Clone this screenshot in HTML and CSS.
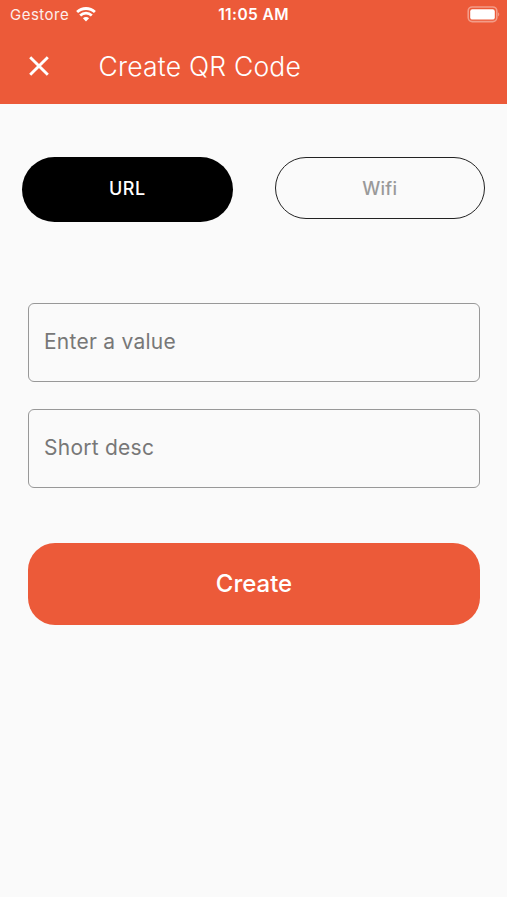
FILE: index.html
```html
<!DOCTYPE html>
<html lang="en">
<head>
<meta charset="utf-8">
<title>Create QR Code</title>
<link rel="stylesheet" href="styles.css">
</head>
<body>
<main class="screen">
  <header class="header">
    <div class="status">
      <div class="carrier"><span class="carrier-name">Gestore</span>
        <svg class="wifi" width="20" height="15" viewBox="0 0 20 15" fill="none" stroke="#fff" stroke-width="2.8">
          <path d="M1.1 5.1C6.2.3 13.8.3 18.9 5.1M4.2 8.5c3.4-3.1 8.2-3.1 11.6 0"/>
          <path d="M6.9 11.2c1.8-1.5 4.4-1.5 6.2 0L10 14.4z" fill="#fff" stroke="none"/>
        </svg>
      </div>
      <span class="time">11:05 AM</span>
      <svg class="battery" width="34" height="17" viewBox="0 0 34 17">
        <rect x="1.2" y="1" width="28.6" height="14.6" rx="4" fill="none" stroke="#fff" stroke-opacity=".4" stroke-width="1.6"/>
        <rect x="3.2" y="3.2" width="24.6" height="10.4" rx="2.2" fill="#fff"/>
        <path d="M31.2 6.2v4.2c1.4-.8 1.4-3.4 0-4.2z" fill="#fff" fill-opacity=".45"/>
      </svg>
    </div>
    <div class="bar">
      <svg class="close" width="20" height="20" viewBox="0 0 20 20" fill="none" stroke="#fff" stroke-width="2.9">
        <path d="M1.2 1.2 18.8 18.8M18.8 1.2 1.2 18.8"/>
      </svg>
      <h1 class="title">Create QR Code</h1>
    </div>
  </header>
  <div class="tabs">
    <button class="tab tab-active"><span>URL</span></button>
    <button class="tab"><span>Wifi</span></button>
  </div>
  <form class="form">
    <input class="field" type="text" placeholder="Enter a value">
    <input class="field" type="text" placeholder="Short desc">
    <button class="submit" type="button"><span>Create</span></button>
  </form>
</main>
</body>
</html>
```
FILE: styles.css
```css
* { box-sizing: border-box; }
body { margin: 0; height: 900px; background: #fff; font-family: Inter, "Liberation Sans", sans-serif; }
.screen { height: 897px; background: #fafafa; overflow: hidden; }
.header { height: 103.5px; background: #ec5a39; color: #fff; }
.status { display: grid; grid-template-columns: 1fr auto 1fr; align-items: center; height: 30px; padding: 0 7px 0 10px; }
.carrier { display: flex; align-items: center; gap: 7px; }
.carrier-name { font-size: 15px; line-height: 20px; letter-spacing: .5px; opacity: .9; }
.wifi { margin-bottom: 1px; }
.time { margin-left: -3px; font-size: 15.5px; line-height: 20px; font-weight: 600; letter-spacing: .4px; }
.battery { justify-self: end; margin: 0 -1px 2px 0; }
.bar { display: flex; align-items: center; gap: 50px; height: 71px; padding-left: 28.5px; }
.title { margin: 0; font-size: 26.5px; line-height: 34px; font-weight: 300; letter-spacing: .2px; }
.tabs { display: flex; align-items: flex-start; justify-content: space-between; height: 65px; margin: 53.5px 22px 0 22px; }
.tab { width: 210.5px; height: 62px; padding: 1px 0 0; border: 1.5px solid #222; border-radius: 31px; background: transparent; color: #999; font: 500 18px/24px Inter, sans-serif; letter-spacing: .3px; }
.tab-active { height: 65px; padding: 0 0 2px; border: 0; border-radius: 32.5px; background: #000; color: #fff; letter-spacing: .5px; }
.form { display: flex; flex-direction: column; margin: 80.5px 27px 0 28px; }
.field { width: 100%; height: 79px; margin-bottom: 27.5px; padding: 0 16px 2px 15px; border: 1px solid #989898; border-radius: 6px; background: transparent; font: 400 21px/28px Inter, sans-serif; letter-spacing: .25px; color: #333; }
.field::placeholder { color: #777; opacity: 1; }
.submit { height: 82px; margin-top: 27px; padding: 1px 0 0; border: 0; border-radius: 27px; background: #ec5a39; color: #fff; font: 500 24px/30px Inter, sans-serif; }
```
